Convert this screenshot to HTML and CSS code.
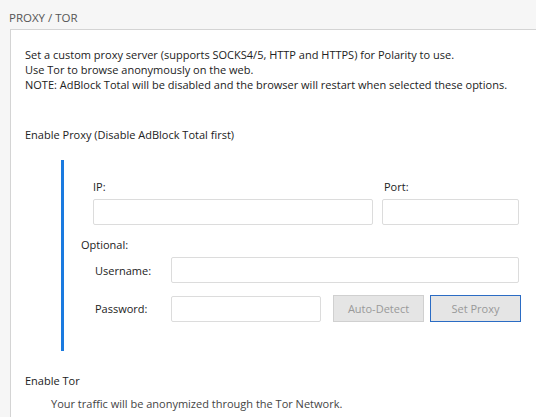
FILE: index.html
```html
<!DOCTYPE html>
<html>
<head>
<meta charset="utf-8">
<link rel="stylesheet" href="styles.css">
</head>
<body>
<div class="page">
  <div class="title">PROXY / TOR</div>
  <div class="panel">
    <div class="intro">
      <div>Set a custom proxy server (supports SOCKS4/5, HTTP and HTTPS) for Polarity to use.</div>
      <div>Use Tor to browse anonymously on the web.</div>
      <div>NOTE: AdBlock Total will be disabled and the browser will restart when selected these options.</div>
    </div>
    <div class="section-label">Enable Proxy (Disable AdBlock Total first)</div>
    <div class="proxy-box">
      <div class="row-ip">
        <div class="field ip">
          <div class="lbl">IP:</div>
          <div class="input"></div>
        </div>
        <div class="field port">
          <div class="lbl">Port:</div>
          <div class="input"></div>
        </div>
      </div>
      <div class="optional">Optional:</div>
      <div class="row-user">
        <div class="lbl2">Username:</div>
        <div class="input user"></div>
      </div>
      <div class="row-pass">
        <div class="lbl2">Password:</div>
        <div class="input pass"></div>
        <div class="btn">Auto-Detect</div>
        <div class="btn focus">Set Proxy</div>
      </div>
    </div>
    <div class="section-label tor">Enable Tor</div>
    <div class="tor-desc">Your traffic will be anonymized through the Tor Network.</div>
  </div>
</div>
</body>
</html>
```
FILE: styles.css
```css
html, body {
  margin: 0;
  padding: 0;
  background: #f6f6f6;
}
body {
  font-family: "Open Sans", "Noto Sans", sans-serif;
  font-size: 11px;
  color: #222;
  width: 536px;
  height: 417px;
  overflow: hidden;
}
.page {
  padding-left: 10px;
}
.title {
  height: 29px;
  line-height: 36px;
  margin-left: -1px;
  color: #555;
  font-size: 11.5px;
  box-sizing: border-box;
}
.panel {
  background: #fff;
  border: 1px solid #d4d4d4;
  border-right: none;
  border-bottom: none;
  padding: 17px 0 0 14px;
  height: 370px;
}
.intro {
  line-height: 15px;
}
.section-label {
  margin-top: 35px;
  line-height: 16px;
}
.proxy-box {
  margin-top: 17px;
  margin-left: 36px;
  border-left: 3px solid #1a7ae0;
  height: 191px;
  box-sizing: border-box;
  padding-top: 20px;
}
.row-ip {
  display: flex;
  gap: 9px;
  padding-left: 29px;
}
.lbl {
  line-height: 14px;
  margin-bottom: 5px;
}
.input {
  height: 24px;
  border: 1px solid #dcdcdc;
  border-radius: 2px;
  background: #fff;
}
.field.ip { width: 280px; }
.field.port { width: 137px; }
.field.port .lbl { padding-left: 2px; }
.optional {
  margin-top: 12px;
  padding-left: 17px;
  line-height: 16px;
}
.row-user, .row-pass {
  display: flex;
  align-items: center;
  padding-left: 31px;
}
.row-user { margin-top: 4px; }
.row-pass { margin-top: 12px; }
.lbl2 { width: 76px; }
.input.user { width: 346px; }
.input.pass { width: 148px; }
.btn {
  box-sizing: border-box;
  width: 91px;
  height: 27px;
  line-height: 25px;
  text-align: center;
  background: #e5e5e5;
  border: 1px solid #d0d0d0;
  color: #999;
  margin-left: 12px;
}
.btn.focus {
  margin-left: 6px;
  border: 1px solid #2b6cc4;
  width: 91px;
}
.section-label.tor {
  margin-top: 22px;
}
.tor-desc {
  margin-top: 7px;
  padding-left: 26px;
  color: #444;
}
```
